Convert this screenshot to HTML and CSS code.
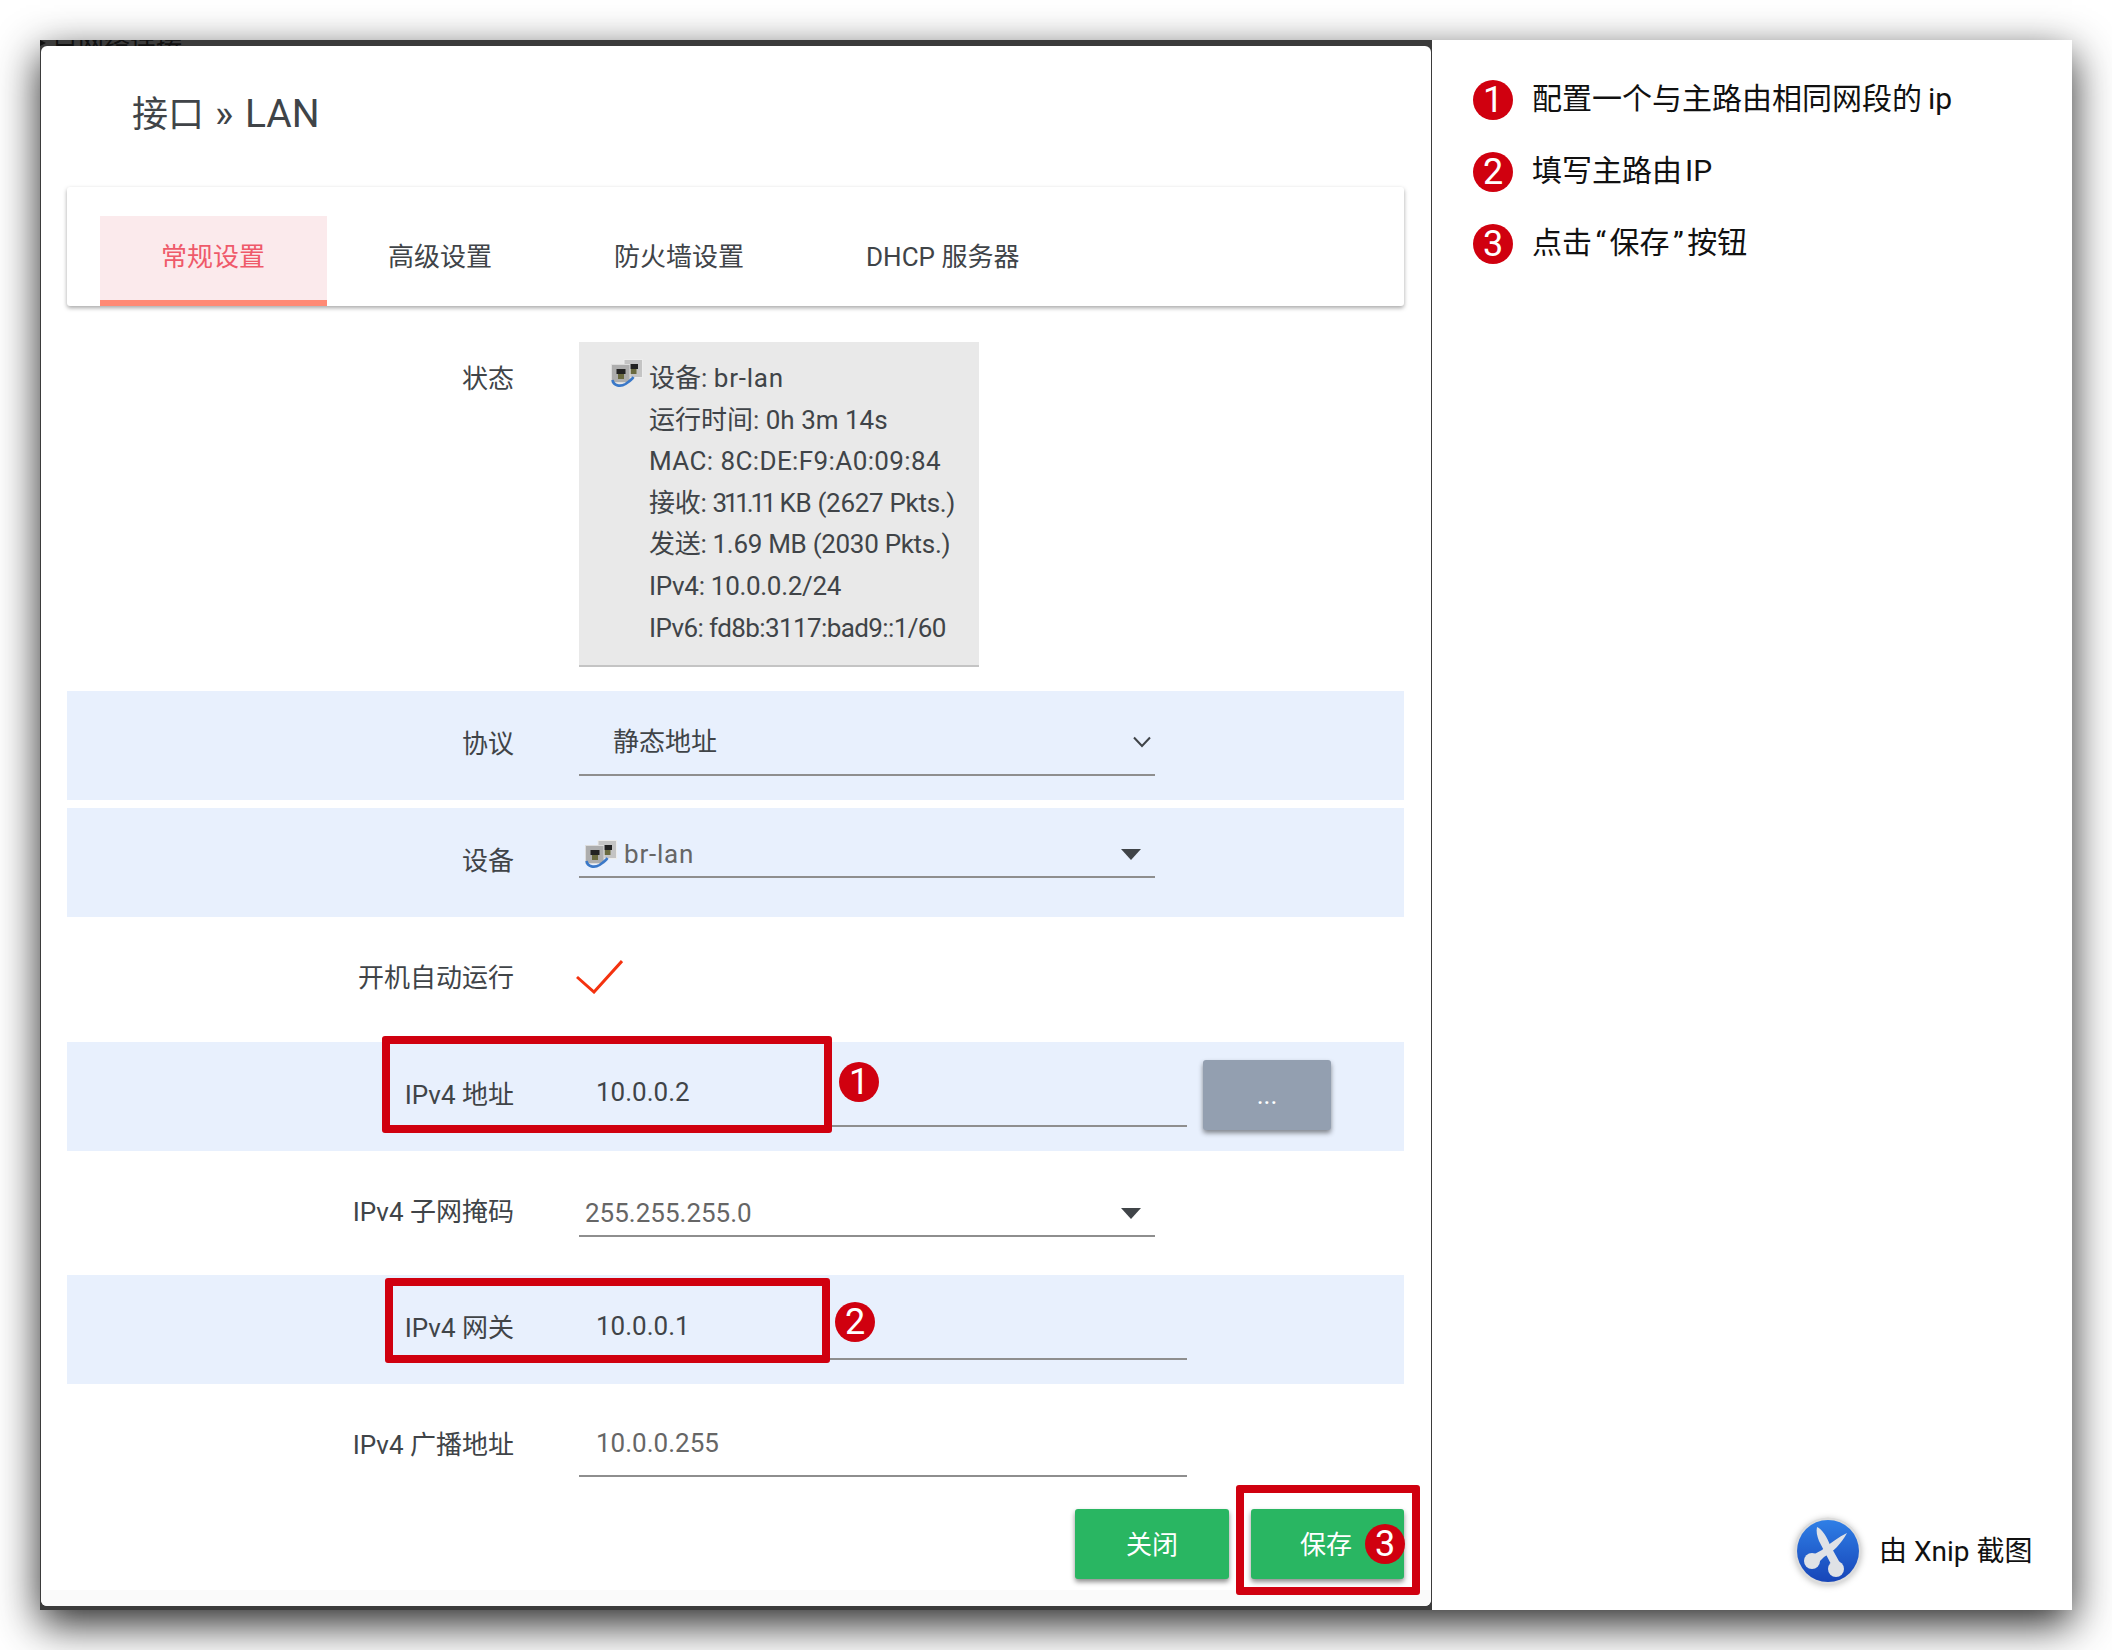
FILE: index.html
```html
<!DOCTYPE html>
<html lang="zh">
<head>
    <meta charset="UTF-8">
    <title>接口 » LAN</title>
    <link rel="stylesheet" href="styles.css">
</head>
<body>
    <div class="shot">
        <div class="backdrop">目网络连接</div>

        <div class="modal">
            <h2 class="title">接口 <span class="title-en">» LAN</span></h2>

            <div class="modal-body">
                <ul class="tabs">
                    <li class="tab active">常规设置</li>
                    <li class="tab">高级设置</li>
                    <li class="tab">防火墙设置</li>
                    <li class="tab">DHCP 服务器</li>
                </ul>

                <div class="row row-status">
                    <label class="label">状态</label>
                    <div class="status">
                        <svg class="net-icon status-icon" viewBox="0 0 32 29"><use href="#bridge"></use></svg>
                        <div>设备: <span class="wide">br-lan</span></div>
                        <div>运行时间: 0h 3m 14s</div>
                        <div class="wide-soft">MAC: 8C:DE:F9:A0:09:84</div>
                        <div class="tight">接收: <span class="narrow-digits">311.11</span> KB (2627 Pkts.)</div>
                        <div class="tight">发送: 1.69 MB (2030 Pkts.)</div>
                        <div class="tight">IPv4: 10.0.0.2/24</div>
                        <div class="tighter">IPv6: fd8b:3117:bad9::1/60</div>
                    </div>
                </div>

                <div class="row shaded">
                    <label class="label">协议</label>
                    <div class="field select-native">
                        <span>静态地址</span>
                        <svg class="chevron" viewBox="0 0 18 12"><path d="M1 1.5l8 8.5 8-8.5"></path></svg>
                    </div>
                </div>

                <div class="row shaded">
                    <label class="label">设备</label>
                    <div class="field select-drop select-high">
                        <svg class="net-icon" viewBox="0 0 32 29"><use href="#bridge"></use></svg>
                        <span class="drop-text wide">br-lan</span>
                        <i class="caret"></i>
                    </div>
                </div>

                <div class="row">
                    <label class="label">开机自动运行</label>
                    <svg class="check" viewBox="0 0 47 34"><path d="M1 17l17 15L46 1"></path></svg>
                </div>

                <div class="row shaded">
                    <label class="label">IPv4 地址</label>
                    <div class="field input input-raised">10.0.0.2</div>
                    <button class="more">...</button>
                </div>

                <div class="row row-mask">
                    <label class="label">IPv4 子网掩码</label>
                    <div class="field select-drop">
                        <span class="drop-text">255.255.255.0</span>
                        <i class="caret"></i>
                    </div>
                </div>

                <div class="row shaded">
                    <label class="label">IPv4 网关</label>
                    <div class="field input">10.0.0.1</div>
                </div>

                <div class="row">
                    <label class="label">IPv4 广播地址</label>
                    <div class="field input muted">10.0.0.255</div>
                </div>

                <div class="actions">
                    <button class="btn">关闭</button>
                    <button class="btn btn-save">保存</button>
                </div>
            </div>

            <div class="modal-edge"></div>
        </div>

        <div class="notes">
            <div class="note"><span class="badge">1</span><span class="note-text">配置一个与主路由相同网段的<span class="gap-wide">ip</span></span></div>
            <div class="note"><span class="badge">2</span><span class="note-text">填写主路由<span class="gap-thin">IP</span></span></div>
            <div class="note"><span class="badge">3</span><span class="note-text">点击<span class="quote">“</span>保存<span class="quote">”</span>按钮</span></div>
            <div class="xnip">
                <svg class="xnip-logo" viewBox="0 0 68 68">
                    <defs>
                        <linearGradient id="xnip-blue" x1="0" y1="0" x2="0" y2="1">
                            <stop offset="0" stop-color="#2f7fe6"></stop>
                            <stop offset="1" stop-color="#1745b8"></stop>
                        </linearGradient>
                    </defs>
                    <circle cx="34" cy="34" r="33.5" fill="#dcdcdc"></circle>
                    <circle cx="34" cy="34" r="31" fill="url(#xnip-blue)"></circle>
                    <g fill="#dfe2e6" transform="translate(-16 -16)">
                        <path d="M39 26c5 2 10 10 13 18l10 18-8 3-13-25c-2-5-3-10-2-14z"></path>
                        <path d="M69 32c-6 11-13 18-23 24l-8 8-7-8 13-7c8-7 17-13 25-17z"></path>
                        <circle cx="34" cy="60" r="8"></circle>
                        <circle cx="58" cy="68" r="8"></circle>
                    </g>
                </svg>
                <span class="xnip-text">由 Xnip 截图</span>
            </div>
        </div>

        <!-- annotations on top of the screenshot -->
        <div class="mark mark-ip"></div>
        <div class="mark mark-gw"></div>
        <div class="mark mark-save"></div>
        <span class="badge pin-ip">1</span>
        <span class="badge pin-gw">2</span>
        <span class="badge pin-save">3</span>
    </div>

    <svg class="defs" width="0" height="0">
        <symbol id="bridge" viewBox="0 0 32 29">
            <rect x="13" y="0.5" width="18.5" height="18" fill="#c4c4c4" stroke="#ededed"></rect>
            <rect x="18" y="5" width="9" height="5" fill="#222"></rect>
            <rect x="19.5" y="10" width="6" height="5" fill="#6a6a3f"></rect>
            <rect x="0.5" y="5.5" width="18.5" height="18" fill="#adadad" stroke="#dcdcdc"></rect>
            <rect x="5.5" y="10" width="9" height="5" fill="#222"></rect>
            <rect x="7" y="15" width="6" height="5" fill="#6a6a3f"></rect>
            <path d="M1.5 21c1 6 8 7 13 4 3-2 6-4 8-7" fill="none" stroke="#3a78c8" stroke-width="2.6"></path>
        </symbol>
    </svg>
</body>
</html>
```

FILE: styles.css
```css
* {
    box-sizing: border-box;
}

body {
    margin: 0;
    padding: 40px;
    height: 1650px;
    overflow: hidden;
    background: #fff;
    font-family: Roboto, "Noto Sans CJK SC", sans-serif;
    font-size: 26px;
    color: #404448;
}

.shot {
    position: relative;
    display: flex;
    width: 2032px;
    height: 1570px;
    background: #3b3b3b;
    box-shadow: 0 14px 40px rgba(0, 0, 0, 0.85);
}

.shot::before {
    content: "";
    position: absolute;
    left: 0;
    top: 0;
    border-left: 6px solid #111;
    border-top: 3px solid transparent;
    border-bottom: 3px solid transparent;
}

.backdrop {
    position: absolute;
    left: 12px;
    top: -15px;
    height: 21px;
    line-height: 36px;
    overflow: hidden;
    clip-path: inset(15px 0 0 0);
    color: #111;
}

.modal {
    position: relative;
    display: flex;
    flex-direction: column;
    width: 1390px;
    margin: 6px 0 4px 1px;
    background: #fff;
    border-radius: 6px;
}

.title {
    margin: 0 0 4px;
    padding-left: 91px;
    height: 137px;
    line-height: 137px;
    font-size: 36px;
    font-weight: 400;
}

.title-en {
    margin-left: 2px;
    font-size: 39px;
    word-spacing: 2px;
}

.modal-body {
    padding: 0 27px 0 26px;
}

.modal-edge {
    flex: 1;
    background: #fafafa;
    border-radius: 0 0 6px 6px;
}

.tabs {
    display: flex;
    height: 119px;
    margin: 0 0 36px;
    padding: 29px 0 0 33px;
    list-style: none;
    background: #fff;
    border-radius: 3px;
    box-shadow: 0 2px 4px rgba(0, 0, 0, 0.35);
}

.tab {
    height: 90px;
    padding: 0 61px;
    line-height: 82px;
}

.tab.active {
    padding: 0 62px 0 61px;
    background: #fbeaec;
    border-bottom: 6px solid #ff8a75;
    color: #ef5a6a;
}

.row {
    display: flex;
    align-items: flex-start;
    height: 109px;
    margin-bottom: 8px;
    padding-top: 33px;
}

.row-status {
    height: 325px;
    margin-bottom: 24px;
    padding-top: 0;
}

.row-mask {
    height: 108px;
}

.shaded {
    background: #e8f0fd;
}

.label {
    flex: none;
    width: 447px;
    margin-right: 65px;
    line-height: 40px;
    text-align: right;
}

.row-status .label {
    margin-top: 17px;
}

.status {
    position: relative;
    width: 400px;
    height: 325px;
    padding: 16px 0 0 70px;
    background: #e9e9e9;
    border-bottom: 2px solid #c4c4c4;
    line-height: 41.6px;
    white-space: nowrap;
}

.wide {
    letter-spacing: 0.8px;
}

.wide-soft {
    letter-spacing: 0.4px;
}

.narrow-digits {
    letter-spacing: -3.2px;
}

.tight {
    letter-spacing: -0.3px;
}

.tighter {
    letter-spacing: -0.6px;
}

.net-icon {
    flex: none;
    width: 32px;
    height: 29px;
}

.status-icon {
    position: absolute;
    left: 32px;
    top: 17px;
}

.defs {
    position: absolute;
}

.field {
    display: flex;
    align-items: center;
    border-bottom: 2px solid #8e8e8e;
}

.select-native {
    width: 576px;
    height: 53px;
    margin-top: -1px;
    padding: 0 4px 0 34px;
    align-items: flex-start;
    justify-content: space-between;
    line-height: 38px;
}

.chevron {
    width: 18px;
    height: 12px;
    margin-top: 13px;
    fill: none;
    stroke: #404448;
    stroke-width: 2;
}

.select-drop {
    width: 576px;
    height: 46px;
    margin-top: -1px;
    padding: 0 14px 0 6px;
    color: #666;
}

.select-high {
    margin-top: -9px;
}

.net-icon + .drop-text {
    margin-left: 7px;
}

.caret {
    margin-left: auto;
    width: 0;
    height: 0;
    border-left: 10px solid transparent;
    border-right: 10px solid transparent;
    border-top: 11px solid #404448;
}

.check {
    width: 47px;
    height: 34px;
    margin: 2px 0 0 -3px;
    fill: none;
    stroke: #f4320f;
    stroke-width: 3;
}

.input {
    width: 608px;
    height: 53px;
    margin-top: -1px;
    padding: 0 0 0 17px;
    align-items: flex-start;
    line-height: 38px;
}

.input-raised {
    line-height: 36px;
}

.muted {
    color: #666;
}

.more {
    width: 128px;
    height: 70px;
    margin: -15px 0 0 16px;
    border: 0;
    border-radius: 3px;
    background: #939fb0;
    box-shadow: 0 3px 5px rgba(0, 0, 0, 0.45);
    color: #fff;
    font: inherit;
    line-height: 60px;
}

.actions {
    display: flex;
    justify-content: flex-end;
    gap: 22px;
    margin: 1px 0 11px;
}

.btn {
    width: 154px;
    height: 70px;
    padding: 0 0 4px;
    border: 0;
    border-radius: 3px;
    background: #29b662;
    box-shadow: 0 3px 5px rgba(0, 0, 0, 0.45);
    color: #fff;
    font: inherit;
}

.btn-save {
    width: 153px;
    padding-right: 3px;
}

.notes {
    position: relative;
    flex: 1;
    padding: 40px 0 0 41px;
    background: #fff;
    border-left: 1px solid #3b3b3b;
}

.note {
    display: flex;
    align-items: center;
    height: 40px;
    margin-bottom: 32px;
    font-size: 30px;
    color: #111;
}

.note .badge {
    margin-right: 21px;
}

.note-text {
    margin: 0 0 8px -2px;
}

.gap-wide {
    margin-left: 6px;
}

.gap-thin {
    margin-left: 3px;
}

.quote {
    margin: 0 3.5px;
}

.badge {
    display: flex;
    flex: none;
    align-items: center;
    justify-content: center;
    width: 40px;
    height: 40px;
    border-radius: 50%;
    background: #d0000f;
    color: #fff;
    font-size: 36px;
    font-family: Roboto, sans-serif;
}

.xnip {
    position: absolute;
    left: 362px;
    bottom: 25px;
    display: flex;
    align-items: center;
    gap: 17px;
    font-size: 28px;
    color: #111;
    white-space: nowrap;
}

.xnip-logo {
    width: 68px;
    height: 68px;
    filter: drop-shadow(0 1px 3px rgba(0, 0, 0, 0.25));
}

.xnip-text {
    margin-bottom: 5px;
}

.mark {
    position: absolute;
    border: 8px solid #d0000f;
    border-radius: 3px;
}

.mark-ip {
    left: 342px;
    top: 996px;
    width: 450px;
    height: 97px;
}

.mark-gw {
    left: 345px;
    top: 1238px;
    width: 445px;
    height: 85px;
}

.mark-save {
    left: 1196px;
    top: 1445px;
    width: 184px;
    height: 110px;
}

.pin-ip,
.pin-gw,
.pin-save {
    position: absolute;
}

.pin-ip {
    left: 799px;
    top: 1022px;
}

.pin-gw {
    left: 795px;
    top: 1262px;
}

.pin-save {
    left: 1325px;
    top: 1484px;
}
```
